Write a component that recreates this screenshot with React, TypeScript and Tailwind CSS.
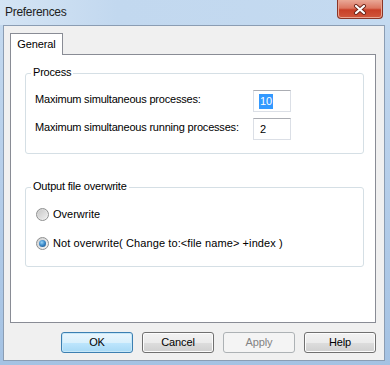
import React from "react";

function Radio({ checked }: { checked?: boolean }) {
  return (
    <span className="w-[13px] h-[13px] shrink-0 rounded-full border border-[#8e8f8f] bg-[linear-gradient(135deg,#d0d0d0,#f6f6f6)] flex items-center justify-center">
      {checked ? (
        <span className="w-[7px] h-[7px] rounded-full bg-[radial-gradient(circle_at_40%_35%,#9ad4f6_0%,#3d8ccc_45%,#15477a_100%)]" />
      ) : (
        <span className="w-[9px] h-[9px] rounded-full bg-[linear-gradient(135deg,#c9c9c9,#ededed)]" />
      )}
    </span>
  );
}

function Btn({ label, variant }: { label: string; variant?: "default" | "disabled" }) {
  const base =
    "w-[72px] h-[21px] rounded-[3px] border flex items-center justify-center text-[11px] tracking-[-0.1px]";
  if (variant === "default")
    return (
      <div className={`${base} border-[#3c7fb1] bg-[linear-gradient(to_bottom,#eaf6fd_0%,#d9f0fc_50%,#bee6fd_51%,#a7d9f5_100%)] text-black shadow-[inset_0_0_0_1px_#c6e7f8]`}>
        {label}
      </div>
    );
  if (variant === "disabled")
    return (
      <div className={`${base} border-[#adb2b5] bg-[#f4f4f4] text-[#838383]`}>{label}</div>
    );
  return (
    <div className={`${base} border-[#707070] bg-[linear-gradient(to_bottom,#f2f2f2_0%,#ebebeb_50%,#dddddd_51%,#cfcfcf_100%)] text-black shadow-[inset_0_0_0_1px_#fcfcfc]`}>
      {label}
    </div>
  );
}

export default function App() {
  return (
    <div className="w-[390px] h-[365px] overflow-hidden flex flex-col bg-[linear-gradient(to_bottom,#c6dbf0_0%,#b8d0eb_40%,#a4c2e3_100%)] font-['Liberation_Sans',Arial,sans-serif] text-black">
      {/* Title bar */}
      <div className="h-[25px] shrink-0 flex items-start justify-between bg-[linear-gradient(to_right,#d4e4f4_0%,#c2d8ef_30%,#c4daf0_100%)]">
        <span className="pl-[5px] pt-[5px] text-[12px] leading-[14px] tracking-[-0.3px] text-[#1e1e1e]">
          Preferences
        </span>
        <div className="mr-[7px] w-[46px] h-[19px] rounded-b-[4px] border border-t-0 border-[#8a3526] bg-[linear-gradient(to_bottom,#e9a898_0%,#dc7660_45%,#c83f27_55%,#d0573c_100%)] shadow-[inset_0_0_0_1px_#eaa591] flex items-center justify-center">
          <svg width="14" height="11" viewBox="0 0 14 11">
            <path d="M3 2 L11 9 M11 2 L3 9" stroke="#6b2418" strokeWidth="4" strokeLinecap="round" />
            <path d="M3 2 L11 9 M11 2 L3 9" stroke="#ffffff" strokeWidth="2.2" strokeLinecap="round" />
          </svg>
        </div>
      </div>

      {/* Client area */}
      <div className="ml-[3px] mr-[5px] mb-[4px] flex-1 border border-[#8b9db3] bg-[#f0f0f0] flex flex-col pt-[7px] pl-[6px] pr-[8px]">
        {/* Tab strip */}
        <div className="flex">
          <div className="relative z-10 -mb-[1px] w-[53px] h-[22px] bg-white border border-b-0 border-[#898c95] flex items-center justify-center text-[11px] tracking-[-0.1px]">
            General
          </div>
        </div>

        {/* Panel */}
        <div className="w-[366px] h-[269px] bg-white border border-[#898c95] pl-[14px] pt-[18px]">
          {/* Process group */}
          <div className="relative w-[339px] h-[81px] border border-[#d5dfe5] rounded-[3px] pt-[16px] pl-[9px] text-[11px] tracking-[-0.2px]">
            <span className="absolute top-[-8px] left-[5px] px-[2px] bg-white leading-[13px]">
              Process
            </span>
            <div className="flex items-center h-[22px]">
              <span className="w-[218px] mb-[4px]">Maximum simultaneous processes:</span>
              <div className="w-[38px] h-[22px] border border-[#dbdfe6] border-t-[#abadb3] bg-white flex items-center pl-[5px]">
                <span className="bg-[#3399ff] text-white leading-[15px] px-[1px]">10</span>
              </div>
            </div>
            <div className="flex items-center h-[22px] mt-[6px]">
              <span className="w-[218px] mb-[4px]">Maximum simultaneous running processes:</span>
              <div className="w-[38px] h-[22px] border border-[#dbdfe6] border-t-[#abadb3] bg-white flex items-center pl-[6px]">
                <span className="leading-[15px]">2</span>
              </div>
            </div>
          </div>

          {/* Output group */}
          <div className="relative mt-[33px] w-[339px] h-[80px] border border-[#d5dfe5] rounded-[3px] pt-[18px] pl-[10px] text-[11px] tracking-[-0.2px]">
            <span className="absolute top-[-8px] left-[5px] px-[2px] bg-white leading-[13px]">
              Output file overwrite
            </span>
            <div className="flex items-center h-[16px] gap-[4px]">
              <Radio />
              <span className="tracking-[0px]">Overwrite</span>
            </div>
            <div className="flex items-center h-[16px] gap-[4px] mt-[13px]">
              <Radio checked />
              <span className="tracking-[0.1px]">Not overwrite( Change to:&lt;file name&gt; +index )</span>
            </div>
          </div>
        </div>

        {/* Buttons */}
        <div className="mt-[9px] flex justify-end gap-[9px]">
          <Btn label="OK" variant="default" />
          <Btn label="Cancel" />
          <Btn label="Apply" variant="disabled" />
          <Btn label="Help" />
        </div>
      </div>
    </div>
  );
}
